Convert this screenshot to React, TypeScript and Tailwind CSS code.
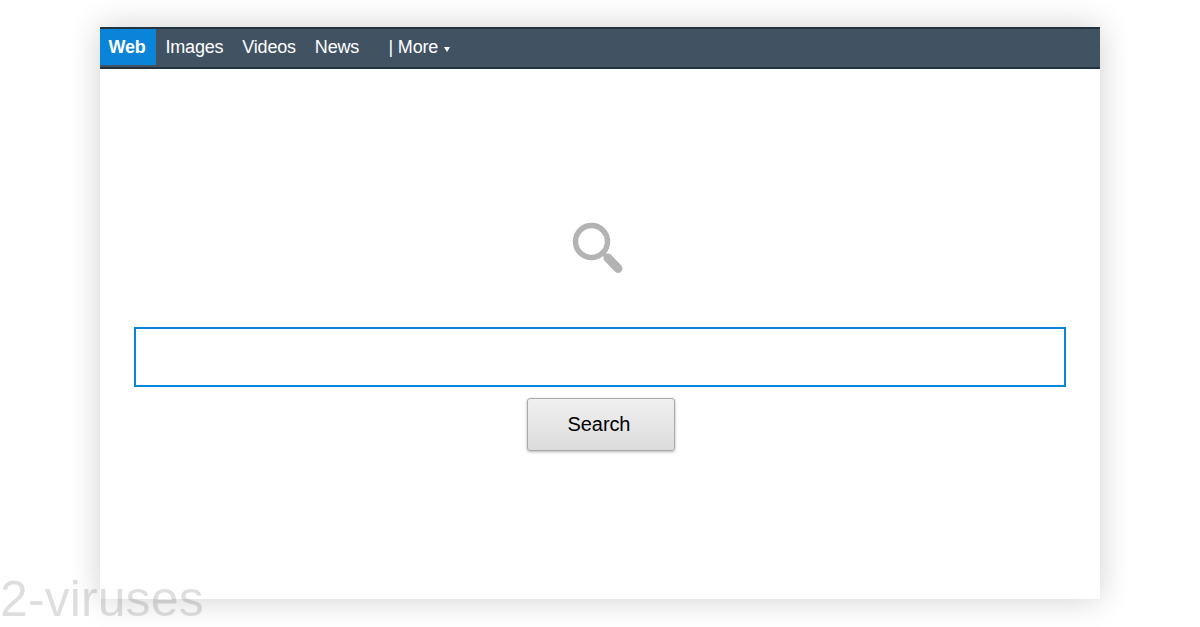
const navLinks = ["Images", "Videos", "News"];

const App = () => {
  return (
    <div className="relative h-[627px] w-[1200px] overflow-hidden bg-white font-['Liberation_Sans',Arial,sans-serif]">
      <div className="px-[100px] pt-[27px]">
        <div className="h-[572px] w-[1000px] bg-white shadow-[0_0_30px_rgba(0,0,0,0.19)]">
          <nav className="flex h-[42px] items-start border-t-2 border-b-2 border-[#22323f] bg-[#415363] text-[18px] leading-[36px] tracking-[-0.2px] text-white">
            <a className="h-[36px] w-[56px] bg-[#0a84d8] pr-[2px] text-center font-bold">Web</a>
            <div className="ml-[9.5px] flex gap-[19px]">
              {navLinks.map((link) => (
                <a key={link}>{link}</a>
              ))}
            </div>
            <a className="ml-[29.5px] flex items-center">
              | More
              <span className="mt-[4px] ml-[6px] h-0 w-0 border-x-[3px] border-t-[5px] border-x-transparent border-t-white" />
            </a>
          </nav>

          <div className="flex flex-col items-center px-[34px]">
            <svg className="mt-[151px] ml-[-4px] blur-[0.4px]" width="54" height="56" viewBox="0 0 54 56" fill="none">
              <circle cx="20.5" cy="21.5" r="16" stroke="#b3b3b3" strokeWidth="5.5" />
              <path d="M32 33 L38 39" stroke="#b3b3b3" strokeWidth="4" />
              <path d="M37 38 L47 48.5" stroke="#b3b3b3" strokeWidth="9" strokeLinecap="round" />
            </svg>
            <input
              type="text"
              className="mt-[51px] h-[60px] w-[932px] border-2 border-[#0a84d8] bg-white outline-none"
            />
            <button className="mt-[11px] ml-[2px] h-[53px] w-[148px] rounded-[3px] border border-[#a8a8a8] bg-gradient-to-b from-[#f0f0f0] to-[#dcdcdc] pr-[4px] pb-[1px] text-[20px] tracking-[-0.1px] text-black shadow-[0_1px_3px_rgba(0,0,0,0.3)]">
              Search
            </button>
          </div>
        </div>
      </div>

      <div className="absolute bottom-[3px] left-0 text-[50px] leading-[50px] tracking-[0.1px] text-black/[0.13]">2-viruses</div>
    </div>
  );
};

export default App;
